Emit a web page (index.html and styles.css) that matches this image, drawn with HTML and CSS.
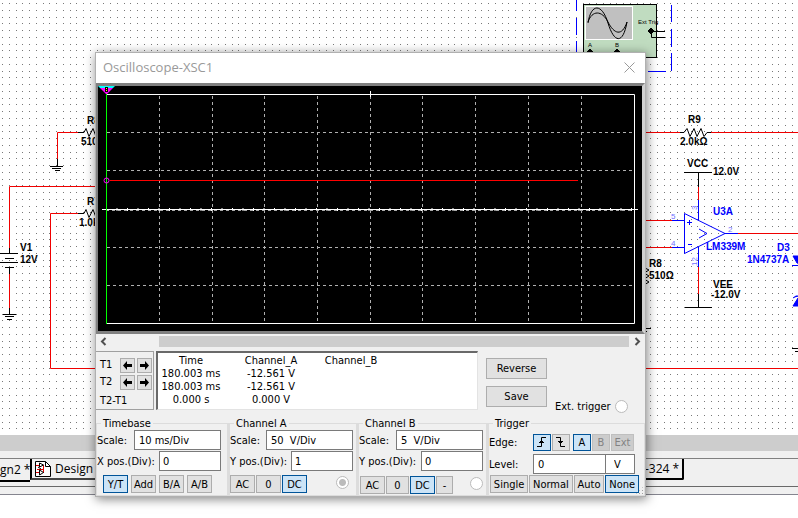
FILE: index.html
```html
<!DOCTYPE html>
<html lang="en">
<head>
  <meta charset="UTF-8" />
  <meta name="viewport" content="width=device-width, initial-scale=1" />
  <title>Oscilloscope-XSC1</title>
  <link rel="stylesheet" href="styles.css">
</head>
<body>

  <!-- schematic sheet -->
  <svg class="schematic">
    <defs>
      <pattern id="dots" x="2" y="3" width="27" height="27" patternUnits="userSpaceOnUse">
        <path stroke="#787878" stroke-dasharray="1 6 1 6 1 5 1 6" d="M0 .5h27M0 7.5h27M0 14.5h27M0 20.5h27" />
      </pattern>
    </defs>
    <rect width="100%" height="100%" fill="url(#dots)" />

    <!-- wires -->
    <g class="wire">
      <path d="M78 132.5H57.5V159" />
      <path d="M100 186.5H9.5V248M9.5 274V308" />
      <path d="M78 213.5H50.5V368.5H800" />
      <path d="M640 132.5H680M711 132.5H800" />
      <path d="M640 220.5H672M640 247.5H672M738 233.5H800" />
      <path d="M698.5 187V200M698.5 267V294" />
    </g>

    <g class="part">
      <path d="M78 132.5h6l2 -4l3 8l4 -8l3 8M57.5 159v7M50 166.5h13M52 168.5h9M55 170.5h5" />
      <path d="M78 213.5h6l2 -4l3 8l4 -8l3 8" />
      <path d="M9.5 248v5M0 253.5h18M5 258.5h9M0 262.5h18M5 267.5h9M9.5 268v6" />
      <path d="M9.5 308v6M3 314.5h13M5 316.5h9M7 319.5h5" />
      <path d="M680 132.5h4l3 -4l3 8l4 -8l3 8l4 -8l3 8l3 -4h4" />
      <path d="M684 172.5h28M698.5 172v15M698.5 294v13M685 307.5h27" />
      <path d="M645 268l4 2l-5 3l5 3l-5 3l5 3l-5 3M640 328.5h11M640 331.5h7" />
      <path d="M792 348.5h8M795 351.5h5" />
    </g>
    <g class="chip">
      <path d="M684.5 213.5V253.5L725 233.5zM672 220.5h12M672 247.5h12M725 233.5h13M698.5 200v20M698.5 247v20" />
      <path d="M699 229l8 4.5l-8 4.5M687 222.5h5M689.5 220v5M688 244.5h4" />
      <path d="M792 265.5h8" />
      <path fill="#0000ff" d="M793 256h7v8l-3 -1zM793 306l5 -8h2v8zM793 298l3 -2h4" />
    </g>

    <g class="name">
      <text x="87" y="124">R8</text>
      <text x="81" y="145">510Ω</text>
      <text x="87" y="205">R7</text>
      <text x="79" y="226">1.0kΩ</text>
      <text x="20" y="251">V1</text>
      <text x="20" y="263">12V</text>
      <text x="688" y="123">R9</text>
      <text x="680" y="145">2.0kΩ</text>
      <text x="687" y="167">VCC</text>
      <text x="713" y="175">12.0V</text>
      <text x="649" y="267">R8</text>
      <text x="649" y="279">510Ω</text>
      <text x="713" y="288">VEE</text>
      <text x="711" y="298">-12.0V</text>
    </g>
    <g class="name blue">
      <text x="713" y="215">U3A</text>
      <text x="706" y="250">LM339M</text>
      <text x="777" y="251">D3</text>
      <text x="747" y="263">1N4737A</text>
    </g>
    <g class="pin">
      <text x="671" y="219">5</text>
      <text x="671" y="246">4</text>
      <text x="728" y="232">2</text>
      <text transform="translate(697 210) rotate(-90)">3</text>
      <text transform="translate(697 266) rotate(-90)">12</text>
    </g>

    <!-- oscilloscope symbol -->
    <path class="marquee" d="M576.5 0V11M576.5 18V35M576.5 41V56M671.5 5V22M671.5 29V47M671.5 53V71M648 71.5H666" />
    <rect x="583.5" y="4.5" width="73" height="53" fill="#c0dcc0" stroke="#000" />
    <rect x="585.5" y="6.5" width="47" height="33" fill="#c0c0c0" stroke="#fff" />
    <g class="trace">
      <path d="M588 23C591 3 602 3 608 23S623 45 627 22" />
      <path d="M588 22C592 10 602 10 608 22S622 37 627 22" />
    </g>
    <g class="part">
      <path d="M651 31.5h14M651.5 31v6.5h14" />
      <path fill="#000" d="M648 31l3 -3l3 3l-3 3zM587 52l3 -3l3 3l-3 3zM614 52l3 -3l3 3l-3 3z" />
    </g>
    <g class="port">
      <text x="638" y="24">Ext Trig</text>
      <text x="588" y="47">A</text>
      <text x="615" y="47">B</text>
    </g>
  </svg>

  <div class="sheet-scroll"></div>
  <nav class="tabs">
    <div class="tab-row">
      <a class="tab active" href="#">gn2 *</a>
      <a class="tab wide" href="#">
        <svg width="16" height="16" viewBox="0 0 16 16" fill="none" stroke="#000">
          <path fill="#fff" d="M.5 .5h10l5 5v10h-15z" />
          <path d="M10.5 .5v5h5" />
          <path stroke="#e00000" d="M1 4.5h4M1 11.5h3M8.5 4v8M2 8.5h6" />
          <path d="M4.5 2v4l4 -2zM4.5 9v5l4 -2.5zM3 6l3 2" />
        </svg>
        Design
      </a>
      <a class="tab last" href="#">-324 *</a>
    </div>
  </nav>
  <div class="status"></div>

  <!-- instrument window -->
  <section class="window">
    <header class="title-bar">
      <h1>Oscilloscope-XSC1</h1>
      <button class="close" aria-label="Close">
        <svg width="11" height="11" viewBox="0 0 11 11"><path d="M.5 .5l10 10M10.5 .5l-10 10" stroke="#999" fill="none" /></svg>
      </button>
    </header>

    <svg class="scope" viewBox="0 0 544 245">
      <rect width="544" height="245" fill="#000" />
      <g class="grid">
        <path d="M61.5 10V237M114.5 10V237M166.5 10V237M219.5 10V237M272.5 10V237M324.5 10V237M377.5 10V237M430.5 10V237M483.5 10V237" />
        <path d="M9 46.5H536M9 84.5H536M9 161.5H536M9 199.5H536" />
      </g>
      <path class="frame" d="M8 8.5H536.5V237.5H8M4 123.5H540M272.5 5V11" />
      <path stroke="#fff" stroke-dasharray="1 9.5" stroke-width="3" d="M8 123.5H536" />
      <path stroke="#aaa" stroke-dasharray="3 3" d="M8 124.5H536" />
      <path stroke="#00ff00" d="M8.5 8V238" />
      <path stroke="#ff0000" d="M12 94.5H480" />
      <circle cx="8.5" cy="94.5" r="2.5" fill="none" stroke="#ff00ff" />
      <path fill="#00ffff" d="M0 0h17l-2 2h-13z" />
      <path fill="#ff00ff" d="M2 2h13l-6 6h-1z" />
      <path stroke="#000" stroke-width="3" d="M8.5 1v5" />
      <path stroke="#ffff00" stroke-dasharray="1 1" d="M8.5 2v4" />
    </svg>

    <div class="scrollbar">
      <button aria-label="Scroll left"><svg width="7" height="9" viewBox="0 0 7 9"><path d="M5.5 1L2 4.5L5.5 8" /></svg></button>
      <div class="thumb"></div>
      <button aria-label="Scroll right"><svg width="7" height="9" viewBox="0 0 7 9"><path d="M1.5 1L5 4.5L1.5 8" /></svg></button>
    </div>

    <div class="readout">
      <div class="cursors">
        <span>T1</span>
        <button aria-label="T1 left"><svg width="9" height="9" viewBox="0 0 9 9"><path d="M0 4.5L4 0V3H9V6H4V9z" /></svg></button>
        <button aria-label="T1 right"><svg width="9" height="9" viewBox="0 0 9 9"><path d="M9 4.5L5 0V3H0V6H5V9z" /></svg></button>
        <span>T2</span>
        <button aria-label="T2 left"><svg width="9" height="9" viewBox="0 0 9 9"><path d="M0 4.5L4 0V3H9V6H4V9z" /></svg></button>
        <button aria-label="T2 right"><svg width="9" height="9" viewBox="0 0 9 9"><path d="M9 4.5L5 0V3H0V6H5V9z" /></svg></button>
        <span class="delta">T2-T1</span>
      </div>
      <div class="values">
        <table>
          <tr><th>Time</th><th class="mid">Channel_A</th><th>Channel_B</th></tr>
          <tr><td>180.003 ms</td><td>-12.561 V</td><td></td></tr>
          <tr><td>180.003 ms</td><td>-12.561 V</td><td></td></tr>
          <tr><td>0.000 s</td><td>0.000 V</td><td></td></tr>
        </table>
      </div>
      <div class="actions">
        <button class="btn">Reverse</button>
        <button class="btn">Save</button>
      </div>
      <label class="ext">Ext. trigger <input type="radio" name="ext"></label>
    </div>

    <div class="groups">
      <fieldset>
        <legend>Timebase</legend>
        <div class="row"><label for="tbScale">Scale:</label><input type="text" class="field" id="tbScale" value="10 ms/Div"></div>
        <div class="row"><label for="tbPos">X pos.(Div):</label><input type="text" class="field short" id="tbPos" value="0"></div>
        <div class="modes base">
          <button class="btn on">Y/T</button>
          <button class="btn">Add</button>
          <button class="btn">B/A</button>
          <button class="btn">A/B</button>
        </div>
      </fieldset>
      <fieldset>
        <legend>Channel A</legend>
        <div class="row"><label for="aScale">Scale:</label><input type="text" class="field" id="aScale" value="50  V/Div"></div>
        <div class="row"><label for="aPos">Y pos.(Div):</label><input type="text" class="field short" id="aPos" value="1"></div>
        <div class="modes">
          <button class="btn">AC</button>
          <button class="btn">0</button>
          <button class="btn on">DC</button>
          <input type="radio" name="chA" aria-label="Channel A" checked>
        </div>
      </fieldset>
      <fieldset>
        <legend>Channel B</legend>
        <div class="row"><label for="bScale">Scale:</label><input type="text" class="field" id="bScale" value="5  V/Div"></div>
        <div class="row"><label for="bPos">Y pos.(Div):</label><input type="text" class="field short" id="bPos" value="0"></div>
        <div class="modes low">
          <button class="btn">AC</button>
          <button class="btn zero">0</button>
          <button class="btn on">DC</button>
          <button class="btn minus">-</button>
          <input type="radio" name="chB" aria-label="Channel B">
        </div>
      </fieldset>
      <fieldset>
        <legend>Trigger</legend>
        <div class="row edge">
          <span class="cap">Edge:</span>
          <button class="btn on icon" aria-label="Rising edge"><svg width="12" height="12" viewBox="0 0 12 12"><path d="M1 10.5h4.5v-9H10M3 6.5h5M4 5.5h3" /></svg></button>
          <button class="btn icon" aria-label="Falling edge"><svg width="12" height="12" viewBox="0 0 12 12"><path d="M1 1.5h4.5v9H10M3 5.5h5M4 6.5h3" /></svg></button>
          <button class="btn on source">A</button>
          <button class="btn" disabled>B</button>
          <button class="btn" disabled>Ext</button>
        </div>
        <div class="row level">
          <label class="cap" for="level">Level:</label>
          <input type="text" class="field" id="level" value="0">
          <input type="text" class="field unit" aria-label="Level unit" value="V">
        </div>
        <div class="modes trig">
          <button class="btn">Single</button>
          <button class="btn">Normal</button>
          <button class="btn">Auto</button>
          <button class="btn on">None</button>
        </div>
      </fieldset>
    </div>
    <div class="grip"></div>
  </section>

</body>
</html>
```

FILE: styles.css
```css
* {
  box-sizing: border-box;
}

body {
  margin: 0;
  min-height: 100vh;
  display: flex;
  flex-direction: column;
  background: #fff;
  color: #000;
  font-family: "DejaVu Sans Condensed", "DejaVu Sans", sans-serif;
  font-size: 11px;
  line-height: 13px;
  overflow: hidden;
}

button,
input {
  font: inherit;
  color: inherit;
  margin: 0;
}

/* schematic */
.schematic {
  display: block;
  flex: 1;
  width: 100%;
  min-height: 0;
}

.wire,
.part,
.chip {
  fill: none;
  stroke: #000;
}

.wire {
  stroke: #f00000;
}

.chip,
.marquee {
  stroke: #0000ff;
}

.marquee {
  fill: none;
}

.trace {
  fill: none;
  stroke: #000;
}

.name {
  font: bold 10px "Liberation Sans", sans-serif;
}

.blue {
  fill: #0000ff;
}

.pin {
  font: 8px "Liberation Sans", sans-serif;
  fill: #7070ff;
}

.port {
  font: 6px "Liberation Sans", sans-serif;
}

/* bottom of the main window */
.sheet-scroll {
  height: 16px;
  background: #cdcdcd;
}

.tabs {
  height: 44px;
  padding-top: 7px;
  background: #f0f0f0;
  border-bottom: 1px solid #85858f;
}

.tab-row {
  display: flex;
  align-items: flex-start;
  height: 29px;
  border-top: 1px solid #808080;
  border-bottom: 1px solid #696969;
}

.tab {
  display: flex;
  align-items: center;
  gap: 4px;
  height: 21px;
  font: 12px "Open Sans", sans-serif;
  color: #000;
  text-decoration: none;
  white-space: nowrap;
  border-bottom: 2px solid #444;
}

.tab.active {
  width: 30px;
  height: 23px;
  border-bottom-color: #000;
}

.tab.wide {
  width: 615px;
  padding-left: 3px;
  border-left: 2px solid #000;
}

.tab.last {
  width: 39px;
  border-right: 2px solid #000;
  border-bottom-color: #000;
  border-bottom-right-radius: 2px;
}

.status {
  height: 23px;
  background: #fff;
}

/* oscilloscope window */
.window {
  position: absolute;
  left: 95px;
  top: 52px;
  width: 551px;
  background: #f0f0f0;
  border: 1px solid #b0b0b0;
  box-shadow: 1px 2px 10px rgba(0, 0, 0, 0.5);
}

.title-bar {
  display: flex;
  align-items: center;
  justify-content: space-between;
  height: 30px;
  padding: 0 10px 2px 7px;
  background: #fff;
}

.title-bar h1 {
  margin: 0;
  font: 13px "Open Sans", sans-serif;
  color: #999;
}

.close {
  display: flex;
  padding: 0;
  border: 0;
  background: none;
}

.scope {
  display: block;
  width: 100%;
  border: solid #808080;
  border-width: 3px 3px 3px 2px;
  border-right-color: #d0d0d0;
}

.grid {
  stroke: #b0b0b0;
  stroke-dasharray: 3 3;
}

.frame {
  fill: none;
  stroke: #fff;
}

.scrollbar {
  display: flex;
  align-items: center;
  height: 14px;
}

.scrollbar button {
  display: flex;
  padding: 0 4px;
  border: 0;
  background: none;
}

.scrollbar path {
  fill: none;
  stroke: #505050;
  stroke-width: 2;
}

.thumb {
  flex: 1;
  height: 11px;
  margin: 0 1px 0 48px;
  background: #cdcdcd;
}

.readout {
  display: flex;
  align-items: flex-start;
  height: 62px;
  margin-top: 3px;
}

.cursors {
  display: grid;
  grid-template-columns: 18px 15px 15px;
  grid-auto-rows: 15px;
  gap: 2px;
  width: 58px;
  height: 59px;
  padding: 6px 0 0 4px;
  border: 1px solid #a0a0a0;
  border-left: 0;
}

.cursors span {
  white-space: nowrap;
}

.cursors .delta {
  grid-column: 1 / 4;
  padding-top: 2px;
}

.cursors button {
  display: flex;
  align-items: center;
  justify-content: center;
  padding: 0;
  border: 1px solid #adadad;
  background: #e1e1e1;
}

.values {
  width: 322px;
  height: 59px;
  margin-left: 2px;
  padding-top: 1px;
  background: #fff;
  border: 2px solid #696969;
  border-right: 1px solid #e3e3e3;
  border-bottom: 1px solid #e3e3e3;
}

table {
  border-collapse: collapse;
  table-layout: fixed;
  width: 226px;
}

th,
td {
  height: 13px;
  padding: 0;
  font-weight: normal;
  text-align: center;
  white-space: nowrap;
}

.mid {
  width: 94px;
}

.btn {
  padding: 0;
  border: 1px solid #adadad;
  background: #e1e1e1;
}

.btn.on {
  border-color: #005499;
  background: #cce4f7;
}

.btn:disabled {
  border-color: #bfbfbf;
  background: #ccc;
  color: #838383;
}

.actions {
  display: flex;
  flex-direction: column;
  gap: 7px;
  width: 61px;
  margin: 7px 8px 0;
}

.actions .btn {
  height: 21px;
}

.ext {
  display: flex;
  align-items: center;
  align-self: flex-end;
  gap: 4px;
}

input[type="radio"] {
  appearance: none;
  width: 13px;
  height: 13px;
  border: 1px solid #bbb;
  border-radius: 50%;
  background: #fff;
}

input[type="radio"]:checked {
  background: radial-gradient(#bbb 0 3px, #fff 4px);
}

/* setting groups */
.groups {
  display: grid;
  grid-template-columns: 132px 129px 130px 1fr;
  margin-top: 4px;
}

fieldset {
  min-width: 0;
  height: 79px;
  margin: 0;
  padding: 0 3px 0 0;
  border: 1px solid #dcdcdc;
}

fieldset + fieldset {
  border-left-width: 2px;
}

legend {
  height: 13px;
  margin-left: 4px;
  padding: 0 2px;
}

.row {
  display: flex;
  align-items: center;
  justify-content: space-between;
  height: 20px;
  margin-bottom: 1px;
  white-space: nowrap;
}

.groups fieldset:first-child {
  padding-right: 6px;
}

.field {
  width: 87px;
  height: 20px;
  padding: 0 4px;
  border: 1px solid #7a7a7a;
  background: #fff;
}

.field.short {
  width: 62px;
  padding: 0 3px;
}

.modes {
  display: flex;
  gap: 1px;
  height: 18px;
  margin-top: 4px;
}

.modes .btn {
  width: 25px;
}

.modes.base {
  margin-left: 6px;
  gap: 3px;
}

.modes.low {
  margin: 5px 0 0 1px;
}

.modes .zero {
  width: 23px;
}

.modes .minus {
  width: 17px;
}

.modes input {
  margin: 1px 4px 0 auto;
}

.modes.low input {
  margin-right: 0;
}

.cap {
  width: 43px;
}

.row.edge {
  height: 24px;
  margin-bottom: 0;
  justify-content: flex-start;
  gap: 1px;
}

.edge .btn {
  width: 18px;
  height: 17px;
}

.edge .source {
  margin-left: 2px;
}

.edge .btn:last-child {
  width: 23px;
}

.icon {
  display: flex;
  align-items: center;
  justify-content: center;
}

.icon path {
  fill: none;
  stroke: #000;
}

.row.level {
  justify-content: flex-start;
}

.level .field {
  width: 73px;
  margin-left: 1px;
}

.level .unit {
  width: 30px;
  margin-left: -1px;
  padding: 0 8px;
}

.trig {
  margin: 0 2px 0 1px;
}

.trig .btn {
  flex: auto;
  width: auto;
}

.grip {
  position: absolute;
  right: 1px;
  bottom: 1px;
  width: 9px;
  height: 9px;
  background: radial-gradient(#a0a0a0 1px, transparent 1px) 0 0 / 3px 3px;
  clip-path: polygon(100% 0, 100% 100%, 0 100%);
}
```
